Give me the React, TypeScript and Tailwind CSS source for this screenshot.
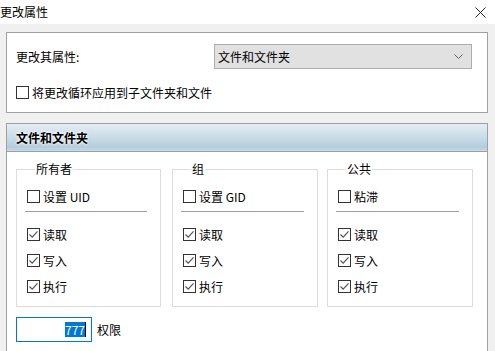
import type { ReactNode } from "react";

const FONT = `"Noto Sans CJK SC", "Microsoft YaHei", "Liberation Sans", sans-serif`;

function Box({ checked }: { checked?: boolean }) {
  return (
    <span className="flex h-[13px] w-[13px] shrink-0 items-center justify-center border border-[#333333] bg-white">
      {checked ? (
        <svg width="11" height="11" viewBox="0 0 11 11" fill="none">
          <path d="M1.5 5.5 L4.2 8.2 L9.5 2.3" stroke="#555555" strokeWidth="1.2" />
        </svg>
      ) : null}
    </span>
  );
}

function Check({ label, checked }: { label: string; checked?: boolean }) {
  return (
    <div className="flex h-[13px] items-center gap-[3px] leading-none">
      <Box checked={checked} />
      <span>{label}</span>
    </div>
  );
}

function Group({ title, top, className }: { title: string; top: ReactNode; className: string }) {
  return (
    <fieldset className={`h-[146px] border border-[#dcdcdc] px-[10px] ${className}`}>
      <legend className="ml-[8px] px-[1px] text-[12px] leading-[16px]">{title}</legend>
      <div className="pt-[13px]">{top}</div>
      <div className="mr-[3px] mt-[8px] ml-[-2px] h-px bg-[#a0a0a0]" />
      <div className="flex flex-col gap-[13px] pt-[16px]">
        <Check label="读取" checked />
        <Check label="写入" checked />
        <Check label="执行" checked />
      </div>
    </fieldset>
  );
}

export default function App() {
  return (
    <div
      className="flex h-[351px] w-[495px] flex-col overflow-hidden bg-[#f0f0f0] text-[12px] text-black"
      style={{ fontFamily: FONT }}
    >
      <div className="flex h-[24px] shrink-0 items-center justify-between bg-white pr-[9px]">
        <span className="leading-none">更改属性</span>
        <svg width="11" height="11" viewBox="0 0 11 11">
          <path d="M0.5 0.5 L10.5 10.5 M10.5 0.5 L0.5 10.5" stroke="#222222" strokeWidth="1" />
        </svg>
      </div>

      <div className="flex flex-col gap-[10px] px-[6px] pt-[8px]">
        <div className="h-[81px] w-[482px] border border-[#a0a0a0] bg-white pl-[9px] pt-[11px]">
          <div className="flex items-center">
            <span className="w-[198px]">更改其属性:</span>
            <div className="flex h-[25px] w-[258px] items-center justify-between border border-[#adadad] bg-[#e1e1e1] pl-[3px] pr-[8px]">
              <span>文件和文件夹</span>
              <svg width="9" height="5" viewBox="0 0 9 5" fill="none">
                <path d="M0.5 0.5 L4.5 4.5 L8.5 0.5" stroke="#606060" strokeWidth="1" />
              </svg>
            </div>
          </div>
          <div className="mt-[17px]">
            <Check label="将更改循环应用到子文件夹和文件" />
          </div>
        </div>

        <div className="h-[260px] w-[482px] border border-[#a0a0a0] bg-white">
          <div className="flex h-[28px] items-center border-b border-[#a0a0a0] bg-[linear-gradient(180deg,#e4edf3_0%,#c9dce7_50%,#b3cddc_85%,#c7dae5_100%)] pl-[9px]">
            <span className="font-bold [text-shadow:0_0_3px_#ffffff,0_0_3px_#ffffff]">文件和文件夹</span>
          </div>
          <div className="flex pl-[9px] pt-[9px]">
            <Group title="所有者" className="w-[145px]" top={<Check label="设置 UID" />} />
            <Group title="组" className="ml-[11px] w-[146px]" top={<Check label="设置 GID" />} />
            <Group title="公共" className="ml-[9px] w-[146px]" top={<Check label="粘滞" />} />
          </div>
          <div className="flex items-center gap-[5px] pl-[9px] pt-[10px]">
            <div className="flex h-[25px] w-[76px] items-center justify-end border border-[#0078d7] bg-white pr-[5px]">
              <span className="bg-[#0078d7] leading-[15px] text-white">777</span>
              <span className="h-[15px] w-px bg-black" />
            </div>
            <span>权限</span>
          </div>
        </div>
      </div>
    </div>
  );
}
